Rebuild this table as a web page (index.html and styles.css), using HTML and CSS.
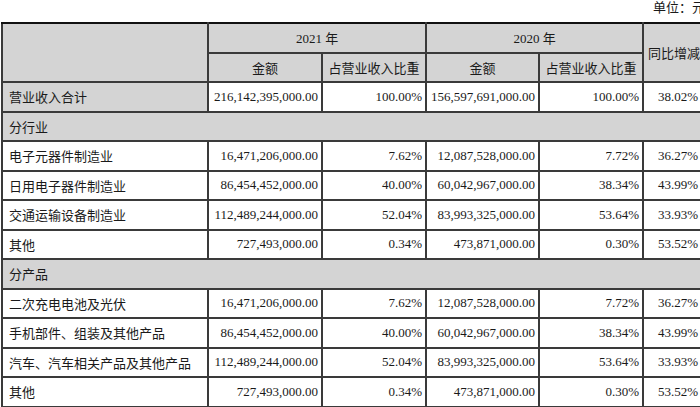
FILE: index.html
```html
<!DOCTYPE html>
<html lang="zh-CN">
<head>
<meta charset="utf-8">
<link rel="stylesheet" href="styles.css">
</head>
<body>
<div class="page">
  <div class="unit">单位：元</div>
  <table class="report">
    <colgroup>
      <col class="c-name"><col class="c-amt"><col class="c-pct"><col class="c-amt2"><col class="c-pct"><col class="c-yoy">
    </colgroup>
    <thead>
      <tr class="h1">
        <th rowspan="2" class="gray"></th>
        <th colspan="2" class="gray">2021 年</th>
        <th colspan="2" class="gray">2020 年</th>
        <th rowspan="2" class="gray yoy-h">同比增减</th>
      </tr>
      <tr class="h2">
        <th class="gray">金额</th>
        <th class="gray">占营业收入比重</th>
        <th class="gray">金额</th>
        <th class="gray">占营业收入比重</th>
      </tr>
    </thead>
    <tbody>
      <tr><td class="gray name">营业收入合计</td><td class="num">216,142,395,000.00</td><td class="num">100.00%</td><td class="num">156,597,691,000.00</td><td class="num">100.00%</td><td class="num">38.02%</td></tr>
      <tr><td colspan="6" class="gray name">分行业</td></tr>
      <tr><td class="name">电子元器件制造业</td><td class="num">16,471,206,000.00</td><td class="num">7.62%</td><td class="num">12,087,528,000.00</td><td class="num">7.72%</td><td class="num">36.27%</td></tr>
      <tr><td class="name">日用电子器件制造业</td><td class="num">86,454,452,000.00</td><td class="num">40.00%</td><td class="num">60,042,967,000.00</td><td class="num">38.34%</td><td class="num">43.99%</td></tr>
      <tr><td class="name">交通运输设备制造业</td><td class="num">112,489,244,000.00</td><td class="num">52.04%</td><td class="num">83,993,325,000.00</td><td class="num">53.64%</td><td class="num">33.93%</td></tr>
      <tr><td class="name">其他</td><td class="num">727,493,000.00</td><td class="num">0.34%</td><td class="num">473,871,000.00</td><td class="num">0.30%</td><td class="num">53.52%</td></tr>
      <tr><td colspan="6" class="gray name">分产品</td></tr>
      <tr><td class="name">二次充电电池及光伏</td><td class="num">16,471,206,000.00</td><td class="num">7.62%</td><td class="num">12,087,528,000.00</td><td class="num">7.72%</td><td class="num">36.27%</td></tr>
      <tr><td class="name">手机部件、组装及其他产品</td><td class="num">86,454,452,000.00</td><td class="num">40.00%</td><td class="num">60,042,967,000.00</td><td class="num">38.34%</td><td class="num">43.99%</td></tr>
      <tr><td class="name">汽车、汽车相关产品及其他产品</td><td class="num">112,489,244,000.00</td><td class="num">52.04%</td><td class="num">83,993,325,000.00</td><td class="num">53.64%</td><td class="num">33.93%</td></tr>
      <tr><td class="name">其他</td><td class="num">727,493,000.00</td><td class="num">0.34%</td><td class="num">473,871,000.00</td><td class="num">0.30%</td><td class="num">53.52%</td></tr>
      <tr><td colspan="6" class="gray name">&nbsp;</td></tr>
    </tbody>
  </table>
</div>
</body>
</html>
```
FILE: styles.css
```css
html, body {
  margin: 0;
  padding: 0;
  background: #fff;
  overflow: hidden;
}
.page {
  width: 720px;
  padding-left: 1px;
  font-family: "Liberation Serif", "Noto Sans CJK SC", serif;
  font-size: 13px;
  color: #1a1a1a;
}
.unit {
  height: 22px;
  line-height: 16px;
  padding-left: 652px;
  white-space: nowrap;
}
.report {
  border-collapse: collapse;
  table-layout: fixed;
  width: 702px;
}
.c-name { width: 206px; }
.c-amt { width: 114px; }
.c-pct { width: 104px; }
.c-amt2 { width: 113px; }
.c-yoy { width: 59px; }
.report th, .report td {
  border: 2px solid #3a3a3a;
  height: 27.5px;
  padding: 0 3px;
  font-weight: normal;
  white-space: nowrap;
  overflow: hidden;
}
.report thead tr:first-child th {
  border-top-color: #111;
}
.gray {
  background: #d4d4d4;
}
.report th {
  text-align: center;
}
.yoy-h {
  text-align: left !important;
  padding-left: 4px !important;
}
.name {
  text-align: left;
  padding-left: 6px !important;
}
.num {
  text-align: right;
  font-size: 13px;
}
```
